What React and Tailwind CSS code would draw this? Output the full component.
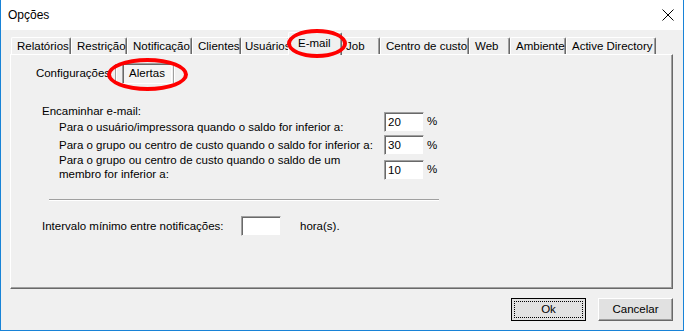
import React from "react";

const tabs = [
  { label: "Relatórios", w: "w-[60px]", pl: "pl-[5px]" },
  { label: "Restrição", w: "w-[56px]", pl: "pl-[5px]" },
  { label: "Notificação", w: "w-[65px]", pl: "pl-[5px]" },
  { label: "Clientes", w: "w-[49px]", pl: "pl-[5px]" },
  { label: "Usuários", w: "w-[49px]", pl: "pl-[3px]" },
  { label: "E-mail", w: "w-[54px]", selected: true },
  { label: "Job", w: "w-[40px]", pl: "pl-[5px]" },
  { label: "Centro de custo", w: "w-[89px]", pl: "pl-[5px]" },
  { label: "Web", w: "w-[41px]", pl: "pl-[5px]" },
  { label: "Ambiente", w: "w-[56px]", pl: "pl-[5px]" },
  { label: "Active Directory", w: "w-[90px]", pl: "pl-[5px]" },
];

function Tab({ label, w, pl, selected }) {
  if (selected) {
    return (
      <div
        className={`${w} relative z-10 -mx-[2px] -mb-px h-[23px] bg-[#f0f0f0] border-t border-l border-white border-r border-r-[#696969] shadow-[inset_-1px_0_0_#a0a0a0] rounded-t-[2px] pl-[9px] pt-[4px] leading-[13px] text-[11.5px]`}
      >
        {label}
      </div>
    );
  }
  return (
    <div
      className={`${w} ${pl} h-[17px] bg-[#f0f0f0] border-t border-l border-white border-r border-r-[#696969] shadow-[inset_-1px_0_0_#a0a0a0] rounded-t-[2px] pt-[2px] leading-[13px] text-[11.5px] whitespace-nowrap`}
    >
      {label}
    </div>
  );
}

function Field({ value, className = "" }) {
  return (
    <div
      className={`w-[40px] h-[20px] bg-white border-t border-l border-[#a0a0a0] border-b border-r border-b-[#f0f0f0] border-r-[#f0f0f0] shadow-[inset_1px_1px_0_#696969] pl-[3px] pt-[3px] leading-[13px] ${className}`}
    >
      {value}
    </div>
  );
}

export default function App() {
  return (
    <div className="relative w-[684px] h-[331px] bg-[#f0f0f0] border-x border-b border-[#1883d7] text-[11.5px] text-black font-['Liberation_Sans',Arial,sans-serif] flex flex-col overflow-hidden">
      {/* Title bar */}
      <div className="h-[30px] bg-white flex items-center justify-between pl-[7px] pr-[8px] shrink-0">
        <span className="text-[12px] leading-[14px]">Opções</span>
        <svg width="12" height="12" viewBox="0 0 12 12" className="mr-[1px]">
          <path d="M0.5 0.5 L11.5 11.5 M11.5 0.5 L0.5 11.5" stroke="#000" strokeWidth="1" />
        </svg>
      </div>

      {/* Body */}
      <div className="pl-[9px] flex flex-col">
        {/* Tab strip */}
        <div className="h-[24px] flex items-end pl-px">
          {tabs.map((t) => (
            <Tab key={t.label} {...t} />
          ))}
        </div>

        {/* Panel */}
        <div className="w-[663px] h-[235px] border-t border-l border-white border-r border-b border-r-[#696969] border-b-[#696969] shadow-[inset_-1px_-1px_0_#a0a0a0] flex flex-col">
          {/* Inner button tabs */}
          <div className="mt-[8px] h-[21px] flex items-stretch">
            <div className="ml-[20px] w-[84px] flex items-center justify-center leading-[13px] whitespace-nowrap">Configurações</div>
            <div className="w-[2px] my-[1px] border-l border-[#a0a0a0] border-r border-r-white" />
            <div className="ml-[5px] w-[50px] bg-[#f4f4f4] border-t border-l border-[#a0a0a0] border-b border-r border-b-white border-r-white shadow-[inset_1px_1px_0_#696969] flex items-center justify-center leading-[13px]">
              Alertas
            </div>
            <div className="ml-[1px] w-[2px] my-[1px] border-l border-[#a0a0a0] border-r border-r-white" />
          </div>

          {/* Forward e-mail section */}
          <div className="mt-[21px] flex">
            <div className="ml-[31px] w-[342px] flex flex-col">
              <div className="h-[13px] leading-[13px]">Encaminhar e-mail:</div>
              <div className="mt-[3px] pl-[17px] h-[13px] leading-[13px] whitespace-nowrap">
                Para o usuário/impressora quando o saldo for inferior a:
              </div>
              <div className="mt-[5px] pl-[17px] h-[13px] leading-[13px] whitespace-nowrap">
                Para o grupo ou centro de custo quando o saldo for inferior a:
              </div>
              <div className="mt-px pl-[17px] leading-[14px]">
                <div className="whitespace-nowrap">Para o grupo ou centro de custo quando o saldo de um</div>
                <div className="whitespace-nowrap">membro for inferior a:</div>
              </div>
            </div>
            <div className="mt-[7px] flex flex-col gap-[3px]">
              <div className="flex items-center gap-[3px]">
                <Field value="20" />
                <span className="leading-[13px] -mt-px">%</span>
              </div>
              <div className="flex items-center gap-[3px]">
                <Field value="30" />
                <span className="leading-[13px]">%</span>
              </div>
              <div className="mt-[2px] flex items-center gap-[3px]">
                <Field value="10" />
                <span className="leading-[13px] -mt-px">%</span>
              </div>
            </div>
          </div>

          {/* Separator */}
          <div className="mt-[18px] ml-[38px] w-[390px] h-[2px] border-t border-[#a0a0a0] border-b border-b-white" />

          {/* Interval row */}
          <div className="mt-[15px] ml-[31px] flex items-center">
            <span className="w-[199px] leading-[13px] whitespace-nowrap">Intervalo mínimo entre notificações:</span>
            <Field value="" className="w-[39px]" />
            <span className="ml-[19px] leading-[13px]">hora(s).</span>
          </div>
        </div>

        {/* Buttons */}
        <div className="mt-[9px] flex justify-end pr-[10px] gap-[12px]">
          <div className="w-[75px] h-[23px] border border-black bg-[#e1e1e1] p-[2px] flex">
            <div className="flex-1 border border-dotted border-black flex items-center justify-center leading-[13px]">Ok</div>
          </div>
          <div className="w-[75px] h-[23px] bg-[#e1e1e1] border-t border-l border-white border-r border-b border-r-[#696969] border-b-[#696969] shadow-[inset_-1px_-1px_0_#a0a0a0] flex items-center justify-center leading-[13px]">
            Cancelar
          </div>
        </div>
      </div>

      {/* Red annotation ellipses */}
      <div className="absolute left-[286px] top-[29px] w-[60px] h-[29px] rounded-[50%] border-[4px] border-[#ff0000] z-20 pointer-events-none" />
      <div className="absolute left-[106px] top-[58px] w-[81px] h-[33px] rounded-[50%] border-[4px] border-[#ff0000] z-20 pointer-events-none" />
    </div>
  );
}
